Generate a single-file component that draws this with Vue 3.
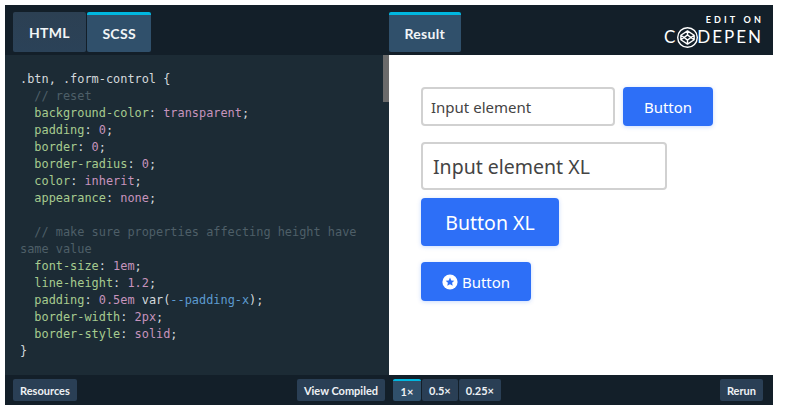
<script setup>
const lines = [
  [['sel', '.btn, .form-control {']],
  [['com', '  // reset']],
  [['prop', '  background-color'], ['pun', ': '], ['val', 'transparent'], ['pun', ';']],
  [['prop', '  padding'], ['pun', ': '], ['val', '0'], ['pun', ';']],
  [['prop', '  border'], ['pun', ': '], ['val', '0'], ['pun', ';']],
  [['prop', '  border-radius'], ['pun', ': '], ['val', '0'], ['pun', ';']],
  [['prop', '  color'], ['pun', ': '], ['val', 'inherit'], ['pun', ';']],
  [['prop', '  appearance'], ['pun', ': '], ['val', 'none'], ['pun', ';']],
  [['pun', ' ']],
  [['com', '  // make sure properties affecting height have']],
  [['com', 'same value']],
  [['prop', '  font-size'], ['pun', ': '], ['val', '1em'], ['pun', ';']],
  [['prop', '  line-height'], ['pun', ': '], ['val', '1.2'], ['pun', ';']],
  [['prop', '  padding'], ['pun', ': '], ['val', '0.5em '], ['fn', 'var('], ['var', '--padding-x'], ['fn', ')'], ['pun', ';']],
  [['prop', '  border-width'], ['pun', ': '], ['val', '2px'], ['pun', ';']],
  [['prop', '  border-style'], ['pun', ': '], ['val', 'solid'], ['pun', ';']],
  [['sel', '}']],
]
</script>

<template>
  <div class="embed">
    <header class="top">
      <div class="top-left">
        <button class="tab">HTML</button>
        <button class="tab active">SCSS</button>
      </div>
      <div class="top-right">
        <button class="tab active">Result</button>
        <div class="brand">
          <span class="edit">EDIT ON</span>
          <span class="word">
            <span>C</span>
            <svg class="logo" viewBox="0 0 24 24" width="21" height="21" fill="none" stroke="#fff" stroke-linejoin="round">
              <circle cx="12" cy="12" r="11.2" stroke-width="1.6" />
              <path stroke-width="1.6" d="M12 4.4 19.6 9.4V14.6L12 19.6 4.4 14.6V9.4ZM12 4.4V9L8.2 12 12 15V19.6M12 9 15.8 12 12 15M4.4 9.4 8.2 12 4.4 14.6M19.6 9.4 15.8 12 19.6 14.6" />
            </svg>
            <span>DEPEN</span>
          </span>
        </div>
      </div>
    </header>
    <main class="body">
      <section class="code">
        <pre class="pre"><code><span v-for="(line, i) in lines" :key="i" class="ln"><span v-for="(t, j) in line" :key="j" :class="t[0]">{{ t[1] }}</span></span></code></pre>
        <div class="thumb"></div>
      </section>
      <section class="result">
        <div class="row">
          <input class="field" value="Input element" />
          <button class="btn">Button</button>
        </div>
        <input class="field xl" value="Input element XL" />
        <button class="btn xl">Button XL</button>
        <button class="btn icon">
          <svg viewBox="0 0 16 16" width="16" height="16">
            <circle cx="8" cy="8" r="7.6" fill="#fff" />
            <path fill="#2d6ff7" d="M8 3.6 9.3 6.4 12.3 6.7 10.1 8.7 10.7 11.7 8 10.2 5.3 11.7 5.9 8.7 3.7 6.7 6.7 6.4Z" />
          </svg>
          Button
        </button>
      </section>
    </main>
    <footer class="bottom">
      <div class="bottom-left">
        <button class="mini">Resources</button>
        <button class="mini">View Compiled</button>
      </div>
      <div class="bottom-right">
        <div class="zoom">
          <button class="mini z on">1×</button>
          <button class="mini z">0.5×</button>
          <button class="mini z">0.25×</button>
        </div>
        <button class="mini">Rerun</button>
      </div>
    </footer>
  </div>
</template>

<style>
html, body { margin: 0; background: #fff; }
</style>

<style scoped>
.embed {
  width: 768px;
  height: 400px;
  margin: 5px 0 0 5px;
  display: flex;
  flex-direction: column;
  background: #131f29;
  font-family: Lato, "Liberation Sans", sans-serif;
  overflow: hidden;
}
button { border: 0; margin: 0; cursor: pointer; font-family: inherit; }
.top { flex: 0 0 50px; display: flex; }
.top-left { width: 384px; display: flex; gap: 1px; padding: 7px 0 3px 8px; box-sizing: border-box; }
.top-right { flex: 1; display: flex; justify-content: space-between; padding: 7px 12px 3px 0; }
.tab {
  height: 40px;
  padding: 0 16px;
  background: #2a3f55;
  background: linear-gradient(#2c4053, #2b4258);
  color: #f2f5f7;
  font-size: 14px;
  font-weight: 700;
  letter-spacing: 0.3px;
  border-radius: 2px;
  box-sizing: border-box;
}
.tab.active {
  background: #30506b;
  border-top: 3px solid #00b7e0;
  padding: 0 15.5px;
}
.brand { display: flex; flex-direction: column; align-items: flex-end; color: #fff; padding-top: 2px; }
.edit { font-size: 9px; font-weight: 700; letter-spacing: 3.15px; line-height: 12px; margin-right: -3px; }
.word { display: flex; align-items: center; font-size: 17px; letter-spacing: 2px; line-height: 22px; margin-top: 0; margin-right: -2px; }
.logo { margin: 0 -1px 0 0; }
.body { flex: 1; display: flex; min-height: 0; }
.code {
  position: relative;
  width: 384px;
  background: #1c2b35;
  box-sizing: border-box;
  overflow: hidden;
}
.pre {
  margin: 0;
  padding: 16px 10px 0 15px;
  font-family: "DejaVu Sans Mono", "Liberation Mono", monospace;
  font-size: 11.9px;
  line-height: 17px;
  color: #c9ced1;
}
.ln { display: block; height: 17px; white-space: pre; }
.sel, .pun { color: #d4d9dc; }
.com { color: #4e5f68; }
.prop { color: #a7cc8f; }
.val { color: #c794bd; }
.fn { color: #d4d9dc; }
.var { color: #5c9bd1; }
.thumb {
  position: absolute;
  top: 0;
  right: 0;
  width: 6px;
  height: 47px;
  background: #6b6b6b;
}
.result {
  flex: 1;
  background: #fff;
  padding: 32px 0 0 32px;
  display: flex;
  flex-direction: column;
  align-items: flex-start;
  font-family: "Noto Sans", "Open Sans", sans-serif;
}
.row { display: flex; gap: 8px; }
.field {
  width: 194px;
  height: 39px;
  box-sizing: border-box;
  border: 2px solid #d1d1d1;
  border-radius: 4px;
  padding: 0 8px;
  font: inherit;
  font-size: 15px;
  color: #444;
  background: #fff;
  outline: 0;
}
.field.xl {
  width: 246px;
  height: 48px;
  margin-top: 16px;
  font-size: 19.5px;
  padding: 0 10px;
}
.btn {
  width: 90px;
  height: 39px;
  background: #2d6ff7;
  color: #fff;
  font-family: inherit;
  font-size: 15px;
  border-radius: 4px;
  box-shadow: 0 1px 4px rgba(45, 111, 247, 0.25);
  padding: 0;
}
.btn.xl {
  width: 138px;
  height: 48px;
  margin-top: 8px;
  font-size: 19.5px;
}
.btn.icon {
  width: 110px;
  margin-top: 16px;
  display: flex;
  align-items: center;
  justify-content: center;
  gap: 4px;
}
.bottom {
  flex: 0 0 30px;
  display: flex;
}
.bottom-left {
  width: 384px;
  box-sizing: border-box;
  display: flex;
  justify-content: space-between;
  padding: 4px 4px 0 8px;
}
.bottom-right {
  flex: 1;
  display: flex;
  justify-content: space-between;
  padding: 4px 10px 0 4px;
}
.mini {
  height: 22px;
  padding: 0 7px;
  background: #2a3f55;
  color: #eef1f4;
  font-size: 11px;
  font-weight: 700;
  border-radius: 2px;
  box-sizing: border-box;
}
.zoom { display: flex; gap: 1px; }
.z { padding: 0 7px; }
.z.on { background: #30506b; border-top: 2px solid #00b7e0; width: 28px; padding: 0; }
</style>
